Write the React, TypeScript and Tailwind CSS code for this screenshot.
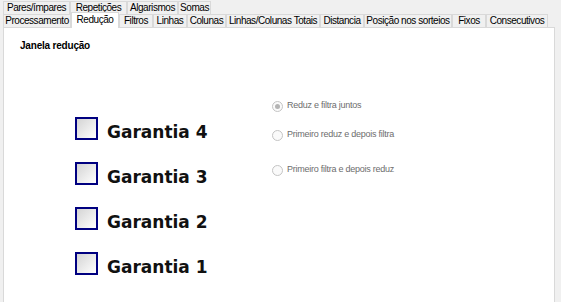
const row1 = [
  { label: 'Pares/ímpares', w: 67 },
  { label: 'Repetições', w: 57 },
  { label: 'Algarismos', w: 51 },
  { label: 'Somas', w: 33 },
];

const row2 = [
  { label: 'Processamento', w: 68 },
  { label: 'Redução', w: 48, active: true },
  { label: 'Filtros', w: 34 },
  { label: 'Linhas', w: 34 },
  { label: 'Colunas', w: 39 },
  { label: 'Linhas/Colunas Totais', w: 94 },
  { label: 'Distancia', w: 44 },
  { label: 'Posição nos sorteios', w: 88 },
  { label: 'Fixos', w: 34 },
  { label: 'Consecutivos', w: 62 },
];

const garantias = [4, 3, 2, 1];

const radios = [
  { label: 'Reduz e filtra juntos', checked: true, gap: 'mt-0' },
  { label: 'Primeiro reduz e depois filtra', checked: false, gap: 'mt-[17px]' },
  { label: 'Primeiro filtra e depois reduz', checked: false, gap: 'mt-[23px]' },
];

export default function App() {
  return (
    <div
      className="w-[561px] h-[302px] overflow-hidden bg-[#f0f0f0] text-[10px] text-black"
      style={{ fontFamily: 'Tahoma, "Liberation Sans", Arial, sans-serif' }}
    >
      {/* tab rows */}
      <div className="pl-[3px] pt-[1px] tracking-[-0.45px]">
        <div className="flex h-[13px]">
          {row1.map((t) => (
            <div
              key={t.label}
              style={{ width: t.w }}
              className="h-[13px] border border-b-0 border-[#d9d9d9] bg-[#f0f0f0] flex items-center justify-center leading-none whitespace-nowrap"
            >
              {t.label}
            </div>
          ))}
        </div>
        <div className="flex h-[13px] relative z-10">
          {row2.map((t) =>
            t.active ? (
              <div
                key={t.label}
                style={{ width: t.w }}
                className="h-[16px] -mt-[2px] pb-[2px] border border-b-0 border-[#d9d9d9] bg-white flex items-center justify-center leading-none whitespace-nowrap"
              >
                {t.label}
              </div>
            ) : (
              <div
                key={t.label}
                style={{ width: t.w }}
                className="h-[13px] border border-b-0 border-[#d9d9d9] bg-[#f0f0f0] flex items-center justify-center leading-none whitespace-nowrap"
              >
                {t.label}
              </div>
            )
          )}
        </div>
      </div>

      {/* panel */}
      <div className="ml-[3px] w-[552px] h-[280px] border border-[#d9d9d9] bg-white">
        <div className="pl-[16px] pt-[10px] font-bold text-[10px] h-[23px] tracking-[-0.2px]">Janela redução</div>
        <div className="flex">
          <div className="w-[268px] shrink-0 pl-[71px] pt-[66px] flex flex-col gap-[22px]">
            {garantias.map((g) => (
              <div key={g} className="flex items-center gap-[9px] h-[23px]">
                <div className="w-[23px] h-[23px] shrink-0 border-2 border-[#000080] bg-gradient-to-br from-[#d4d4d4] to-white" />
                <span
                  className="font-bold text-[17px] text-[#111] pt-[8px] whitespace-nowrap"
                  style={{ fontFamily: 'Verdana, "DejaVu Sans", sans-serif' }}
                >
                  Garantia {g}
                </span>
              </div>
            ))}
          </div>
          <div className="pt-[49px] flex flex-col text-[9px] text-[#6d6d6d]">
            {radios.map((r) => (
              <div key={r.label} className={`flex items-center gap-[4px] h-[12px] ${r.gap}`}>
                <div className="w-[11px] h-[11px] rounded-full border border-[#c4c4c4] bg-[#fafafa] flex items-center justify-center">
                  {r.checked && <div className="w-[5px] h-[5px] rounded-full bg-[#b4b4b4]" />}
                </div>
                <span className="tracking-[-0.25px] whitespace-nowrap">{r.label}</span>
              </div>
            ))}
          </div>
        </div>
      </div>
    </div>
  );
}
